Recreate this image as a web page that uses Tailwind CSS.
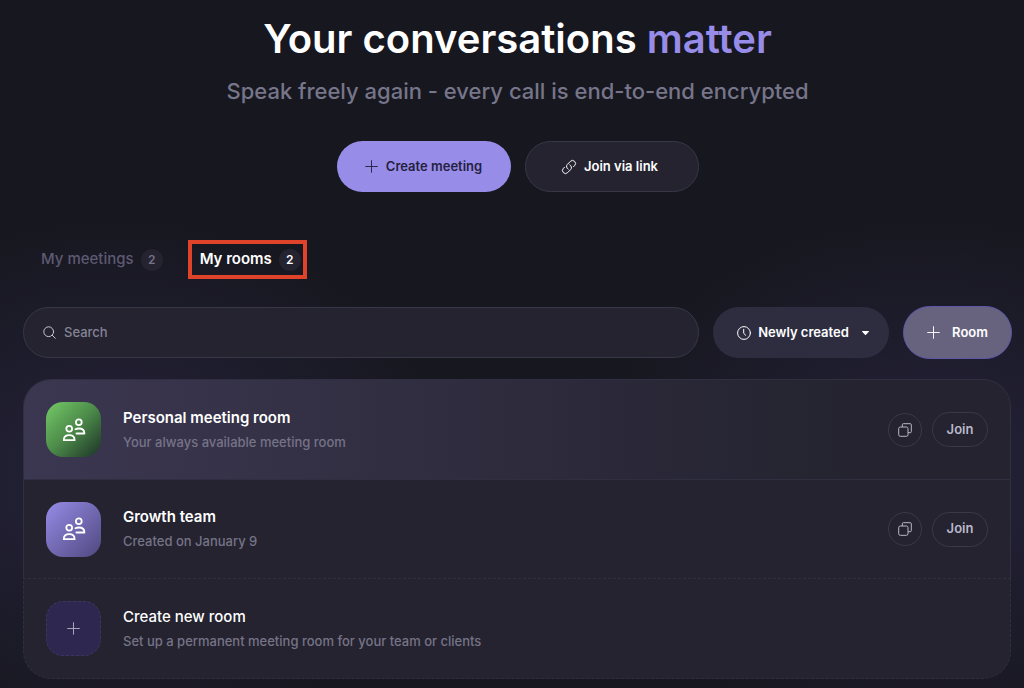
<!DOCTYPE html>
<html lang="en">
<head>
<meta charset="utf-8">
<meta name="viewport" content="width=device-width, initial-scale=1">
<title>My rooms</title>
<script src="https://cdn.jsdelivr.net/npm/@tailwindcss/browser@4"></script>
</head>
<body class="min-h-screen bg-[#17171f] bg-[radial-gradient(340px_270px_at_120px_480px,#25223a,#25223a00),radial-gradient(340px_270px_at_calc(100%-100px)_480px,#25223a,#25223a00)] font-['Inter',sans-serif] font-medium text-white">
<svg class="hidden" aria-hidden="true">
  <symbol id="plus" viewBox="0 0 14 14"><path d="M7 .7v12.6M.7 7h12.6" fill="none" stroke="currentColor" stroke-linecap="round"/></symbol>
  <symbol id="people" viewBox="0 0 24 24"><g fill="none" stroke="currentColor" stroke-width="1.8" stroke-linejoin="round" stroke-linecap="round"><circle cx="7.2" cy="10.8" r="2.9"/><path d="M1.8 22.2c0-3.200 2-5 5.400-5s5.400 1.800 5.400 5z"/><circle cx="16.800" cy="4.200" r="2.900"/><path d="M13.400 11.200c1-.5 2.100-.7 3.400-.7 3.500 0 5.600 1.900 5.600 5h-8"/></g></symbol>
  <symbol id="copy" viewBox="0 0 14 14"><g fill="none" stroke="currentColor" stroke-linejoin="round"><rect x=".7" y="4" width="9.300" height="9.300" rx="1.600"/><path d="M4.300 4V1.700a1 1 0 0 1 1-1h7a1 1 0 0 1 1 1v7a1 1 0 0 1-1 1H10"/></g></symbol>
</svg>
<main class="flex flex-col pt-[15px] pr-3 pb-2 pl-[23px]">
  <header class="flex flex-col items-center text-center">
    <h1 class="text-[40px] leading-12 font-semibold">Your conversations <span class="text-[#978ce8]">matter</span></h1>
    <p class="mt-3 text-[22px] leading-8 text-[#767589]">Speak freely again - every call is end-to-end encrypted</p>
    <div class="mt-[34px] flex gap-[14px] text-[13px] font-semibold">
      <button class="flex h-[51px] w-[174px] items-center justify-center gap-2 rounded-full bg-[#978ce8] text-[#25213f]"><svg class="size-[13px]"><use href="#plus"/></svg>Create meeting</button>
      <button class="flex h-[51px] w-[174px] items-center justify-center gap-[7px] rounded-full border border-[#383748] bg-[#24232f] pr-1"><svg class="size-4" viewBox="0 0 24 24" fill="none" stroke="currentColor" stroke-width="1.500" stroke-linecap="round" stroke-linejoin="round"><path d="M13.190 8.688a4.500 4.500 0 0 1 1.242 7.244l-4.500 4.500a4.500 4.500 0 0 1-6.364-6.364l1.757-1.757m13.350-.622 1.757-1.757a4.500 4.500 0 0 0-6.364-6.364l-4.500 4.500a4.500 4.500 0 0 0 1.242 7.244"/></svg>Join via link</button>
    </div>
  </header>

  <nav class="mt-12 flex items-center gap-[25px] pl-[18px] text-[15px]" aria-label="Lists">
    <button class="flex items-center gap-[7px] text-[#5d5a72]">My meetings<span class="grid size-[22px] place-items-center rounded-full bg-[#24232f] text-[12px] font-semibold text-[#74718a]">2</span></button>
    <button class="flex h-[39px] items-center gap-[7px] border-4 border-[#df4329] pr-0.5 pl-2 font-semibold" aria-current="true">My rooms<span class="grid size-[22px] place-items-center rounded-full bg-[#24232f] text-[12px]">2</span></button>
  </nav>

  <div class="mt-[27px] flex items-center gap-[14px] text-[13px]">
    <label class="flex h-[51px] min-w-0 flex-1 items-center gap-2 rounded-full border border-[#383748] bg-[#24232f] px-[19px]">
      <svg class="size-[13px] text-[#c7c5d3]" viewBox="0 0 13 13" fill="none" stroke="currentColor" stroke-linecap="round"><circle cx="5.700" cy="5.700" r="4.900"/><path d="M9.300 9.300l3 3"/></svg>
      <input class="min-w-0 flex-1 bg-transparent outline-none placeholder:text-[#858397]" type="search" placeholder="Search" aria-label="Search">
    </label>
    <button class="flex h-[51px] w-[176px] items-center justify-center gap-[7px] rounded-full bg-[#2e2d3f] pl-1 font-semibold" aria-haspopup="listbox">
      <svg class="size-[14px]" viewBox="0 0 14 14" fill="none" stroke="currentColor" stroke-linecap="round" stroke-linejoin="round"><circle cx="7" cy="7" r="6.400"/><path d="M6.700 3.300v4l2 2"/></svg>Newly created
      <svg class="ml-1.5 h-1 w-[7px]" viewBox="0 0 7 4" fill="currentColor"><path d="M.4 0h6.200c.4 0 .5.400.2.700L4 3.700a.7.700 0 0 1-1 0L.2.700C-.1.400 0 0 .4 0z"/></svg>
    </button>
    <button class="flex h-[53px] w-[109px] items-center justify-center gap-3 rounded-full border border-[#5d56a8] bg-[#67637f] font-semibold"><svg class="size-[13px]"><use href="#plus"/></svg>Room</button>
  </div>

  <ul class="mt-[20px] mr-px rounded-[28px] bg-[#24232f]">
    <li class="flex h-[101px] items-center rounded-t-[28px] border border-[#302f41] bg-linear-to-r from-[#3c3751] to-[#24232f] to-85% px-[22px]">
      <span class="grid size-[55px] place-items-center rounded-[17px] bg-linear-to-br from-[#76cb68] via-[#4c8a49] to-[#1d3426]"><svg class="size-6"><use href="#people"/></svg></span>
      <div class="ml-[22px] flex-1"><h2 class="text-[15px] leading-6 font-semibold">Personal meeting room</h2><p class="text-[13px] leading-6 text-[#767387]">Your always available meeting room</p></div>
      <button class="grid size-[34px] place-items-center rounded-full border border-[#3a3948] text-[#bbb8ca]" aria-label="Copy link"><svg class="size-[14px]"><use href="#copy"/></svg></button>
      <button class="ml-2.5 h-[35px] w-14 rounded-full border border-[#3a3948] text-[13px] font-semibold text-[#bbb8ca]">Join</button>
    </li>
    <li class="flex h-[98px] items-center border-x border-[#302f41] px-[22px]">
      <span class="grid size-[55px] place-items-center rounded-[17px] bg-linear-to-br from-[#978ce8] to-[#504980]"><svg class="size-6"><use href="#people"/></svg></span>
      <div class="ml-[22px] flex-1"><h2 class="text-[15px] leading-6 font-semibold">Growth team</h2><p class="text-[13px] leading-6 text-[#767387]">Created on January 9</p></div>
      <button class="grid size-[34px] place-items-center rounded-full border border-[#3a3948] text-[#bbb8ca]" aria-label="Copy link"><svg class="size-[14px]"><use href="#copy"/></svg></button>
      <button class="ml-2.5 h-[35px] w-14 rounded-full border border-[#3a3948] text-[13px] font-semibold text-[#bbb8ca]">Join</button>
    </li>
    <li class="flex h-[101px] items-center rounded-b-[28px] border border-dashed border-[#302f3c] px-[22px]">
      <button class="grid size-[55px] place-items-center rounded-[17px] border border-dashed border-[#3d375f] bg-[#2e2850] text-[#b1aec4]" aria-label="Create new room"><svg class="size-[13px]"><use href="#plus"/></svg></button>
      <div class="ml-[22px] flex-1"><h2 class="text-[15px] leading-6">Create new room</h2><p class="text-[13px] leading-6 text-[#767387]">Set up a permanent meeting room for your team or clients</p></div>
    </li>
  </ul>
</main>
</body>
</html>
